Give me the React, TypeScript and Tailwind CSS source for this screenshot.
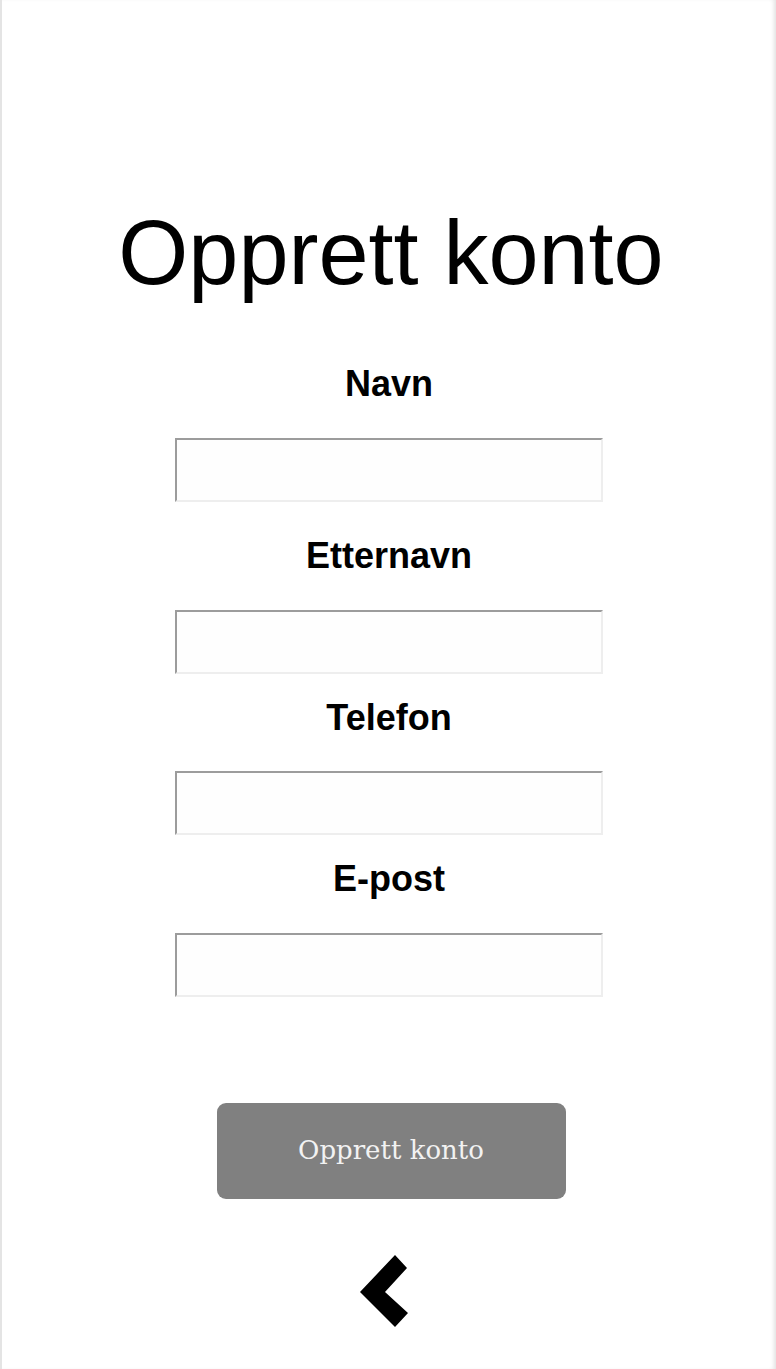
import React from "react";

function Field({ label, mt }: { label: string; mt: string }) {
  return (
    <>
      <div className={`${mt} text-[36px] leading-none font-bold text-black`}>{label}</div>
      <input
        type="text"
        className="mt-[35.5px] w-[428px] h-[64px] bg-[#fefefe] border-2 border-t-[#9c9c9c] border-l-[#9c9c9c] border-r-[#eeeeee] border-b-[#eeeeee] outline-none"
      />
    </>
  );
}

export default function App() {
  return (
    <div
      className="min-h-[1369px] w-full bg-white border-l-2 border-[#e4e4e4] shadow-[inset_-4px_0_4px_-2px_rgba(0,0,0,0.12)] flex flex-col items-center"
      style={{ fontFamily: '"Liberation Sans", Arial, sans-serif' }}
    >
      <h1 className="mt-[208px] ml-[4px] text-[90px] leading-none font-normal text-black">Opprett konto</h1>
      <Field label="Navn" mt="mt-[68px]" />
      <Field label="Etternavn" mt="mt-[36.5px]" />
      <Field label="Telefon" mt="mt-[26px]" />
      <Field label="E-post" mt="mt-[26px]" />
      <button className="mt-[106px] ml-[4px] w-[349px] h-[96px] rounded-[9px] bg-[#808080] text-[#f2f2f2] text-[26px] font-['DejaVu_Serif','Liberation_Serif',serif]">
        Opprett konto
      </button>
      <svg className="mt-[56px] mr-[10px]" width="50" height="74" viewBox="0 0 50 74" aria-label="Tilbake">
        <polygon points="36,0 48,13 26,37 49,58 36,72 1,37" fill="#000" />
      </svg>
    </div>
  );
}
